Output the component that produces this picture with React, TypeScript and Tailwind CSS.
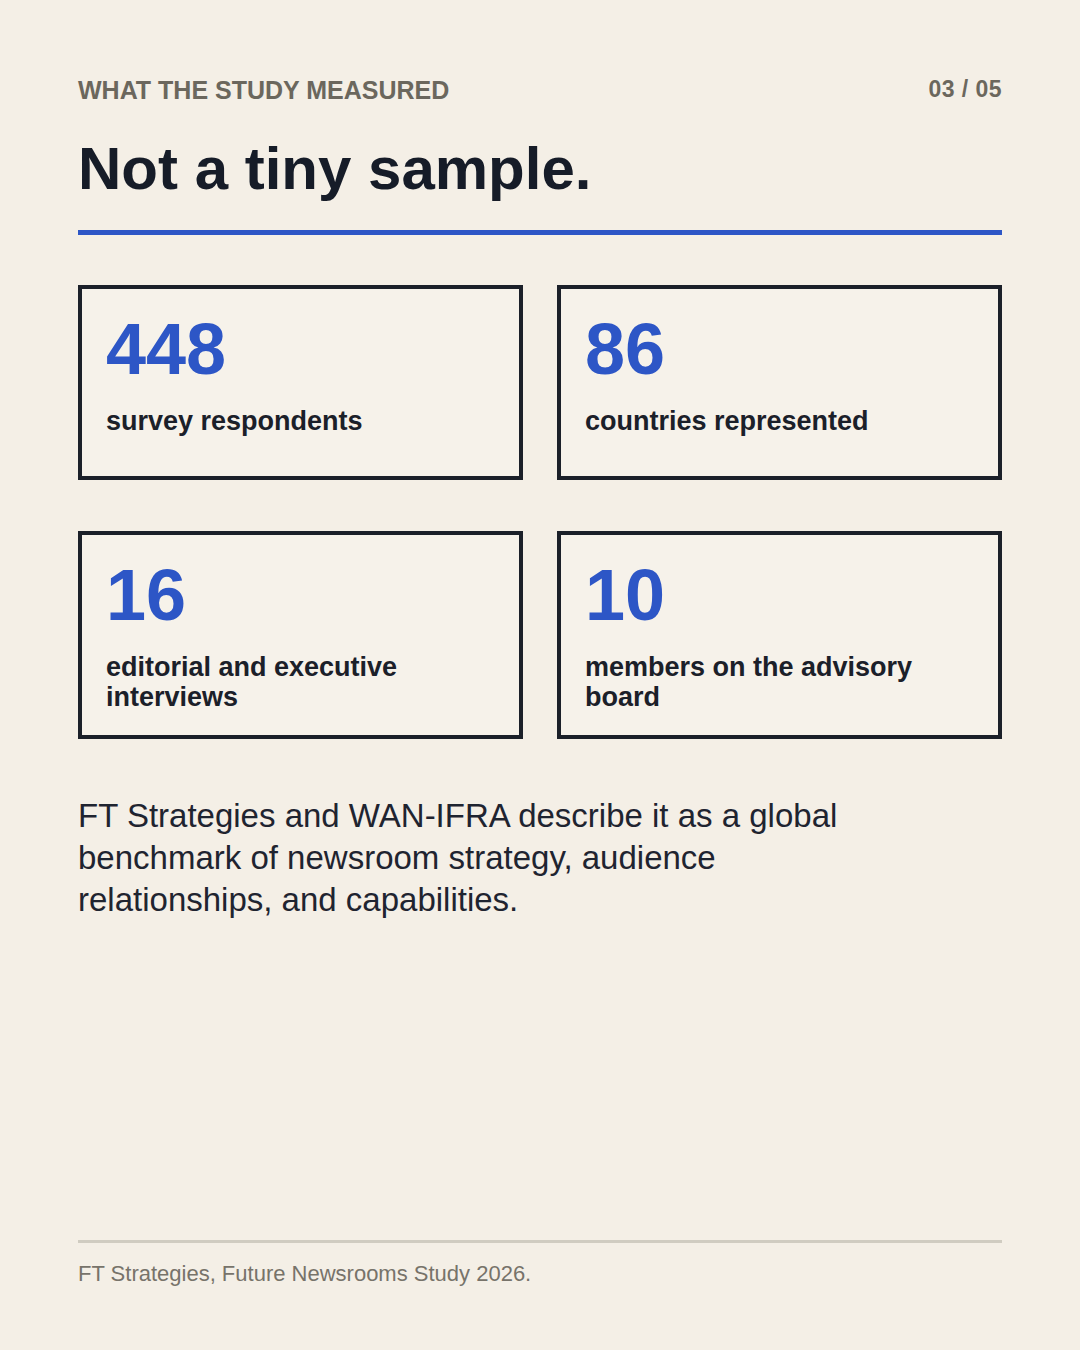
const stats = [
  { value: "448", label: "survey respondents" },
  { value: "86", label: "countries represented" },
  { value: "16", label: "editorial and executive interviews" },
  { value: "10", label: "members on the advisory board" },
]

function StatCard({ value, label }: { value: string; label: string }) {
  return (
    <div className="border-4 border-[#1b2029] bg-[#f6f2ea] px-6 pt-6 pb-[23px] min-h-[195px]">
      <div className="text-[72px] leading-none font-bold text-[#2d56c6]">{value}</div>
      <div className="mt-[21px] text-[27px] leading-[30px] font-bold text-[#1b2029] max-w-[340px]">{label}</div>
    </div>
  )
}

export default function App() {
  return (
    <div
      className="min-h-[1350px] bg-[#f4efe6] flex flex-col pt-[75px] px-[78px] pb-[60px]"
      style={{ fontFamily: '"Liberation Sans", Arial, sans-serif' }}
    >
      <div className="flex items-start justify-between">
        <div className="text-[25px] leading-[1.2] font-bold uppercase text-[#6b675d]">What the study measured</div>
        <div className="text-[23px] leading-[1.2] font-bold tracking-[0.02em] text-[#6b675d] pt-[1px]">03 / 05</div>
      </div>

      <h1 className="mt-[31px] text-[60px] leading-[66px] font-bold text-[#161c28]">Not a tiny sample.</h1>
      <div className="mt-[28px] h-[5px] bg-[#2d56c6]" />

      <div className="mt-[50px] grid grid-cols-2 gap-x-[34px] gap-y-[51px]">
        {stats.map((s) => (
          <StatCard key={s.value} value={s.value} label={s.label} />
        ))}
      </div>

      <p className="mt-[56px] max-w-[800px] text-[33px] leading-[42px] text-[#1f2430]">
        FT Strategies and WAN-IFRA describe it as a global benchmark of newsroom strategy, audience relationships, and
        capabilities.
      </p>

      <div className="mt-auto border-t-[3px] border-[#d0ccc1] pt-[16px]">
        <p className="text-[22px] leading-[1.4] text-[#77736a]">FT Strategies, Future Newsrooms Study 2026.</p>
      </div>
    </div>
  )
}
